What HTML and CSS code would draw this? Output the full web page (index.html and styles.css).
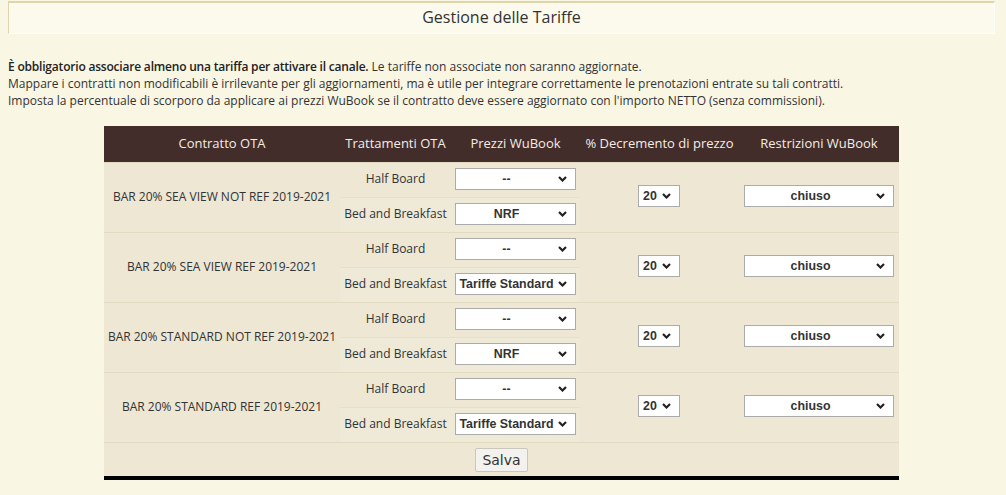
FILE: index.html
```html
<!DOCTYPE html>
<html lang="it">
<head>
    <meta charset="UTF-8">
    <title>Gestione delle Tariffe</title>
    <link rel="stylesheet" href="styles.css">
</head>
<body>
    <div class="title-box">Gestione delle Tariffe</div>

    <p class="intro">
        <b>È obbligatorio associare almeno una tariffa per attivare il canale.</b> Le tariffe non associate non saranno aggiornate.<br>
        Mappare i contratti non modificabili è irrilevante per gli aggiornamenti, ma è utile per integrare correttamente le prenotazioni entrate su tali contratti.<br>
        Imposta la percentuale di scorporo da applicare ai prezzi WuBook se il contratto deve essere aggiornato con l'importo NETTO (senza commissioni).
    </p>

    <table class="rates">
        <thead>
            <tr>
                <th class="c-contract">Contratto OTA</th>
                <th class="c-board">Trattamenti OTA</th>
                <th class="c-price">Prezzi WuBook</th>
                <th class="c-dec">% Decremento di prezzo</th>
                <th class="c-restr">Restrizioni WuBook</th>
            </tr>
        </thead>
        <tbody>
            <tr class="first">
                <td class="contract" rowspan="2">BAR 20% SEA VIEW NOT REF 2019-2021</td>
                <td class="board">Half Board</td>
                <td class="price"><select class="sel-price"><option>--</option></select></td>
                <td class="dec" rowspan="2"><select class="sel-dec"><option>20</option></select></td>
                <td class="restr" rowspan="2"><select class="sel-restr"><option>chiuso</option></select></td>
            </tr>
            <tr class="second">
                <td class="board">Bed and Breakfast</td>
                <td class="price"><select class="sel-price"><option>NRF</option></select></td>
            </tr>

            <tr class="first">
                <td class="contract" rowspan="2">BAR 20% SEA VIEW REF 2019-2021</td>
                <td class="board">Half Board</td>
                <td class="price"><select class="sel-price"><option>--</option></select></td>
                <td class="dec" rowspan="2"><select class="sel-dec"><option>20</option></select></td>
                <td class="restr" rowspan="2"><select class="sel-restr"><option>chiuso</option></select></td>
            </tr>
            <tr class="second">
                <td class="board">Bed and Breakfast</td>
                <td class="price"><select class="sel-price"><option>Tariffe Standard</option></select></td>
            </tr>

            <tr class="first">
                <td class="contract" rowspan="2">BAR 20% STANDARD NOT REF 2019-2021</td>
                <td class="board">Half Board</td>
                <td class="price"><select class="sel-price"><option>--</option></select></td>
                <td class="dec" rowspan="2"><select class="sel-dec"><option>20</option></select></td>
                <td class="restr" rowspan="2"><select class="sel-restr"><option>chiuso</option></select></td>
            </tr>
            <tr class="second">
                <td class="board">Bed and Breakfast</td>
                <td class="price"><select class="sel-price"><option>NRF</option></select></td>
            </tr>

            <tr class="first">
                <td class="contract" rowspan="2">BAR 20% STANDARD REF 2019-2021</td>
                <td class="board">Half Board</td>
                <td class="price"><select class="sel-price"><option>--</option></select></td>
                <td class="dec" rowspan="2"><select class="sel-dec"><option>20</option></select></td>
                <td class="restr" rowspan="2"><select class="sel-restr"><option>chiuso</option></select></td>
            </tr>
            <tr class="second">
                <td class="board">Bed and Breakfast</td>
                <td class="price"><select class="sel-price"><option>Tariffe Standard</option></select></td>
            </tr>
        </tbody>
        <tfoot>
            <tr>
                <td colspan="5" class="save-cell"><button class="save">Salva</button></td>
            </tr>
        </tfoot>
    </table>
</body>
</html>
```

FILE: styles.css
```css
body {
    margin: 0 8px;
    background-color: #f9f6e4;
    font-family: "Open Sans", "Noto Sans", sans-serif;
    color: #333;
}
.title-box {
    margin-top: 1px;
    height: 30px;
    line-height: 29px;
    width: 985px;
    background-color: #fcfaed;
    border-top: 2px solid #ddd5ab;
    border-left: 1px solid #ddd5ab;
    border-right: 1px solid #fff;
    border-bottom: 1px solid #fff;
    text-align: center;
    font-size: 16px;
    color: #333;
}
.intro {
    margin: 24px 0 0;
    font-size: 12px;
    line-height: 17px;
    color: #333;
}
.intro b {
    font-weight: 600;
    letter-spacing: -0.2px;
    color: #222;
}

/* Rates table */
.rates {
    margin: 17px 0 0 96px;
    width: 795px;
    border-collapse: collapse;
    table-layout: fixed;
    background-color: #ede7d4;
    font-size: 12px;
    border-bottom: 4px solid #000;
}
.rates th {
    height: 34px;
    padding: 0 0 2px;
    background-color: #432d2b;
    color: #f3ece4;
    font-weight: normal;
    font-size: 13px;
    text-align: center;
}
.c-contract { width: 236px; }
.c-board { width: 111px; }
.c-price { width: 129px; }
.c-dec { width: 159px; }
.c-restr { width: 160px; }

.rates td {
    padding: 0 0 3px;
    height: 31px;
    text-align: center;
    color: #333;
}
.rates tr.first td {
    border-top: 1px solid #e2dbc1;
}
.rates tr.first td.board,
.rates tr.first td.price {
    border-bottom: 1px solid #e6e0cb;
}
.rates tr.second td {
    background-color: #efe9d8;
}
.rates td.price {
    text-align: left;
    padding-left: 4px;
}
.rates td.dec {
    text-align: left;
    padding-left: 58px;
}
.rates td.restr {
    text-align: left;
    padding-left: 5px;
}

select {
    -webkit-appearance: none;
    appearance: none;
    height: 22px;
    border: 1px solid #ababab;
    border-radius: 0;
    background-color: #fff;
    background-image: url("data:image/svg+xml;utf8,<svg xmlns='http://www.w3.org/2000/svg' width='9' height='6' viewBox='0 0 9 6'><polyline points='1,1 4.5,4.5 8,1' fill='none' stroke='%23222' stroke-width='2.2'/></svg>");
    background-repeat: no-repeat;
    background-position: right 8px center;
    font-family: "Liberation Sans", Arial, sans-serif;
    font-weight: bold;
    font-size: 12.4px;
    color: #333;
    padding: 0 20px 0 3px;
    vertical-align: middle;
}
.sel-price {
    width: 121px;
    padding-left: 2px;
    text-align-last: center;
}
.sel-dec {
    width: 42px;
    padding-left: 4px;
}
.sel-restr {
    width: 150px;
    text-align-last: center;
}

.rates td.save-cell {
    height: 33px;
    padding: 0;
    border-top: 1px solid #e2dbc1;
    background-color: #ede7d4;
}
.save {
    height: 24px;
    width: 53px;
    padding: 0;
    background-color: #f3f2ef;
    border: 1px solid #c9c6bd;
    border-radius: 2px;
    font-family: "DejaVu Sans", sans-serif;
    font-size: 14px;
    color: #333;
    cursor: pointer;
}
```
